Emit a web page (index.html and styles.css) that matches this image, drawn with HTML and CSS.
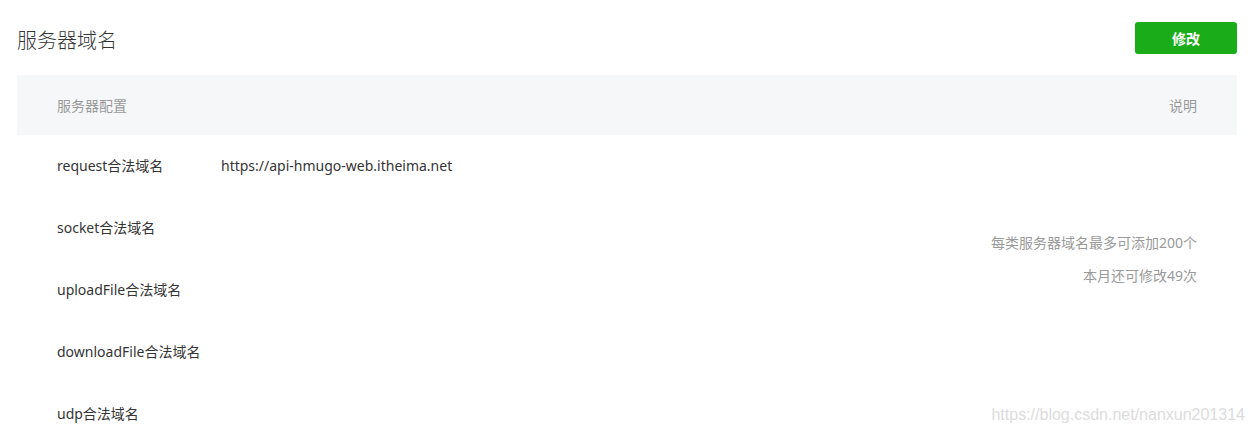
FILE: index.html
```html
<!DOCTYPE html>
<html lang="zh-CN">
<head>
<meta charset="utf-8">
<title>服务器域名</title>
<link rel="stylesheet" href="styles.css">
</head>
<body>
<div class="page">
  <div class="head">
    <h2 class="title">服务器域名</h2>
    <button class="btn">修改</button>
  </div>
  <div class="table">
    <div class="thead">
      <span class="th">服务器配置</span>
      <span class="th">说明</span>
    </div>
    <div class="tbody">
      <div class="rows">
        <div class="row"><span class="label">request合法域名</span><span class="value">https://api-hmugo-web.itheima.net</span></div>
        <div class="row"><span class="label">socket合法域名</span><span class="value"></span></div>
        <div class="row"><span class="label">uploadFile合法域名</span><span class="value"></span></div>
        <div class="row"><span class="label">downloadFile合法域名</span><span class="value"></span></div>
        <div class="row"><span class="label">udp合法域名</span><span class="value"></span></div>
      </div>
      <div class="desc">
        <p>每类服务器域名最多可添加200个</p>
        <p>本月还可修改49次</p>
      </div>
    </div>
  </div>
  <div class="watermark">https://blog.csdn.net/nanxun201314</div>
</div>
</body>
</html>
```

FILE: styles.css
```css
html, body {
  margin: 0;
  padding: 0;
  background: #fff;
}
body {
  font-family: "Noto Sans", "Noto Sans CJK SC", sans-serif;
  color: #353535;
}
.page {
  position: relative;
  width: 1254px;
  height: 435px;
  overflow: hidden;
  padding: 0 17px;
  box-sizing: border-box;
}
.head {
  display: flex;
  align-items: center;
  justify-content: space-between;
  height: 75px;
  padding-top: 4px;
  box-sizing: border-box;
}
.title {
  margin: 0;
  font-size: 20px;
  font-weight: 300;
  color: #353535;
  line-height: 1;
  font-family: "Noto Sans CJK SC", sans-serif;
}
.btn {
  width: 102px;
  height: 32px;
  margin-top: -4px;
  border: none;
  border-radius: 3px;
  background: #1aad19;
  color: #fff;
  font-family: "Noto Sans CJK SC", sans-serif;
  font-size: 14px;
  font-weight: bold;
  padding: 0;
}
.thead {
  display: flex;
  justify-content: space-between;
  align-items: center;
  height: 60px;
  background: #f6f7f9;
  padding: 0 40px;
}
.th {
  font-size: 14px;
  color: #9a9a9a;
  font-family: "Noto Sans CJK SC", sans-serif;
}
.tbody {
  display: flex;
  justify-content: space-between;
  padding: 0 40px;
}
.rows {
  display: flex;
  flex-direction: column;
  margin-top: -1px;
}
.row {
  display: flex;
  align-items: center;
  height: 62px;
  font-size: 14px;
}
.label {
  width: 164px;
  color: #353535;
}
.value {
  font-size: 14px;
  color: #353535;
}
.desc {
  padding-top: 91px;
  text-align: right;
  font-size: 14px;
  color: #9a9a9a;
}
.desc p {
  margin: 0;
  line-height: 33px;
}
.watermark {
  position: absolute;
  right: 9px;
  top: 406px;
  font-family: "Liberation Sans", Arial, sans-serif;
  font-size: 16px;
  color: #dcdcdc;
}
```
